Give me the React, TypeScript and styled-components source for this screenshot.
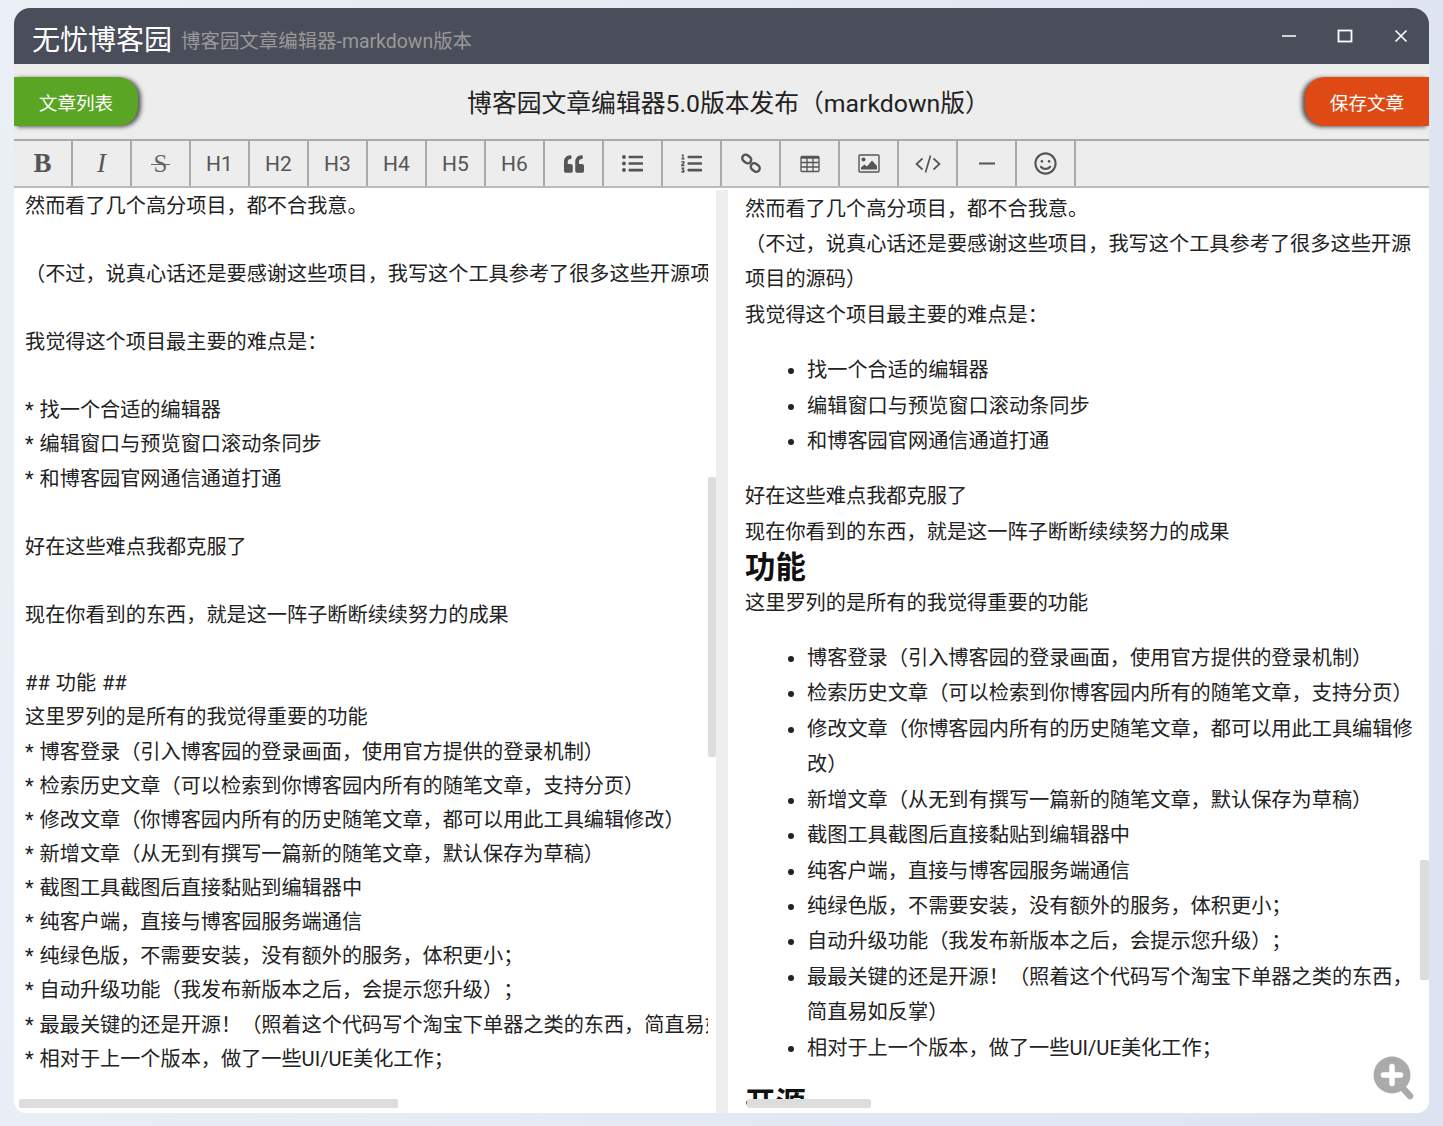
import React from "react";
import styled, { createGlobalStyle } from "styled-components";
import { FaListUl, FaListOl, FaQuoteLeft, FaRegSmile } from "react-icons/fa";

const CJK = `Roboto, "Noto Sans CJK SC", sans-serif`;

const Global = createGlobalStyle`
  html, body { margin: 0; padding: 0; }
  body {
    width: 1443px; height: 1126px; overflow: hidden;
    background: linear-gradient(100deg, #ebeff6 0%, #dde4f1 100%);
    font-family: ${CJK};
    text-spacing-trim: space-all;
  }
`;

const Page = styled.div`
  box-sizing: border-box; width: 1443px; height: 1126px; padding: 8px 14px 13px;
`;
const Win = styled.div`
  width: 1415px; height: 1105px; display: flex; flex-direction: column;
  border-radius: 16px 16px 12px 12px; overflow: hidden; background: #fff;
`;
const TitleBar = styled.header`
  flex: none; height: 56px; background: #4a4d5a; display: flex; align-items: center; padding-left: 18px;
`;
const Brand = styled.span`
  font-size: 28px; color: #fff; line-height: 56px; padding-top: 5px; height: 51px;
`;
const Sub = styled.span`
  font-size: 19.45px; color: #999; margin-left: 9px; padding-top: 6px; flex: 1;
`;
const WinBtns = styled.div`
  display: flex; align-items: center; gap: 32px; padding-right: 16px;
`;
const WinIcon = styled.svg`
  width: 24px; height: 24px; display: block; fill: none; stroke: #fff; stroke-width: 1.6;
`;
const ActionBar = styled.div`
  flex: none; height: 75px; background: #ededed; display: flex; align-items: center; justify-content: space-between;
`;
const ActionBtn = styled.button<{ $side: "left" | "right" }>`
  width: 124px; height: 49px; border: 0; padding: 0; color: #fff; font: 400 18.6px ${CJK};
  margin-top: -1px;
  background: ${(p) => (p.$side === "left" ? "#5ba524" : "#df4a14")};
  border-radius: ${(p) => (p.$side === "left" ? "0 20px 20px 0" : "20px 0 0 20px")};
  box-shadow: ${(p) => (p.$side === "left" ? "3px 1px 4px #555" : "-3px 1px 4px #555")};
`;
const DocTitle = styled.h1`
  margin: -2px 0 0 14px; font-size: 24.8px; font-weight: 400; color: #222; white-space: nowrap;
`;
const Toolbar = styled.div`
  flex: none; box-sizing: border-box; height: 49px; background: #ededed; display: flex;
  border-top: 2px solid #aaa; border-bottom: 2px solid #bbb;
`;
const ToolBtn = styled.div<{ $serif?: boolean; $italic?: boolean; $bold?: boolean }>`
  box-sizing: border-box; width: 59px; height: 45px; border-right: 2px solid #aaa;
  display: flex; align-items: center; justify-content: center; color: #555;
  font-family: ${(p) => (p.$serif ? `"Liberation Serif", serif` : CJK)};
  font-size: ${(p) => (p.$serif ? "27px" : "21px")};
  font-style: ${(p) => (p.$italic ? "italic" : "normal")};
  font-weight: ${(p) => (p.$bold ? 700 : 400)};
`;
const Strike = styled.span`
  position: relative; font-size: 25px; color: #666;
  &::after {
    content: ""; position: absolute; left: -3px; right: -3px; top: 14px; height: 1.5px; background: #666;
  }
`;
const ToolSvg = styled.svg`
  display: block; color: #555;
`;
const Body = styled.main`
  flex: 1; min-height: 0; display: flex; position: relative;
`;
const EditorPane = styled.section`
  flex: none; width: 702px; position: relative; overflow: hidden;
`;
const EditorText = styled.div`
  width: 683px; height: 100%; padding: 0.5px 0 0 11px; overflow: hidden;
`;
const CodeLine = styled.div`
  height: 34.13px; line-height: 34.13px; font-size: 20.17px; color: #222; white-space: pre; word-spacing: 0.9px;
`;
const Divider = styled.div`
  flex: none; width: 12px; margin-top: 2px; background: #eee;
`;
const PreviewPane = styled.section`
  flex: 1; min-width: 0; position: relative; overflow: hidden;
`;
const PreviewText = styled.div`
  box-sizing: border-box; height: 920px; overflow: hidden; padding: 3.5px 14px 0 17px;
  font-size: 20.2px; line-height: 35.4px; color: #222;
`;
const Para = styled.p`
  margin: 0;
`;
const List = styled.ul`
  margin: 20px 0; padding: 0 0 0 62px;
`;
const Heading = styled.h2`
  margin: 0; font-size: 30.4px; font-weight: 700; line-height: 35.5px; color: #111;
`;
const Thumb = styled.div<{ $x: number; $y: number; $w: number; $h: number }>`
  position: absolute; left: ${(p) => p.$x}px; top: ${(p) => p.$y}px; width: ${(p) => p.$w}px; height: ${(p) => p.$h}px;
  background: #ddd; border-radius: 2px;
`;
const ZoomBtn = styled.svg`
  position: absolute; right: 13px; bottom: 12px; width: 44px; height: 46px; display: block;
`;

const left = [
  "然而看了几个高分项目，都不合我意。", "",
  "（不过，说真心话还是要感谢这些项目，我写这个工具参考了很多这些开源项目的源码）", "",
  "我觉得这个项目最主要的难点是：", "",
  "* 找一个合适的编辑器", "* 编辑窗口与预览窗口滚动条同步", "* 和博客园官网通信通道打通", "",
  "好在这些难点我都克服了", "",
  "现在你看到的东西，就是这一阵子断断续续努力的成果", "",
  "## 功能 ##", "这里罗列的是所有的我觉得重要的功能",
  "* 博客登录（引入博客园的登录画面，使用官方提供的登录机制）",
  "* 检索历史文章（可以检索到你博客园内所有的随笔文章，支持分页）",
  "* 修改文章（你博客园内所有的历史随笔文章，都可以用此工具编辑修改）",
  "* 新增文章（从无到有撰写一篇新的随笔文章，默认保存为草稿）",
  "* 截图工具截图后直接黏贴到编辑器中",
  "* 纯客户端，直接与博客园服务端通信",
  "* 纯绿色版，不需要安装，没有额外的服务，体积更小；",
  "* 自动升级功能（我发布新版本之后，会提示您升级）；",
  "* 最最关键的还是开源！（照着这个代码写个淘宝下单器之类的东西，简直易如反掌）",
  "* 相对于上一个版本，做了一些UI/UE美化工作；",
];
const hard = ["找一个合适的编辑器", "编辑窗口与预览窗口滚动条同步", "和博客园官网通信通道打通"];
const feats = [
  "博客登录（引入博客园的登录画面，使用官方提供的登录机制）",
  "检索历史文章（可以检索到你博客园内所有的随笔文章，支持分页）",
  "修改文章（你博客园内所有的历史随笔文章，都可以用此工具编辑修改）",
  "新增文章（从无到有撰写一篇新的随笔文章，默认保存为草稿）",
  "截图工具截图后直接黏贴到编辑器中",
  "纯客户端，直接与博客园服务端通信",
  "纯绿色版，不需要安装，没有额外的服务，体积更小；",
  "自动升级功能（我发布新版本之后，会提示您升级）；",
  "最最关键的还是开源！（照着这个代码写个淘宝下单器之类的东西，简直易如反掌）",
  "相对于上一个版本，做了一些UI/UE美化工作；",
];

const LinkIcon = () => (
  <ToolSvg width="22" height="21" viewBox="0 0 22 21" fill="none" stroke="currentColor" strokeWidth="2.4">
    <rect x="2" y="2.5" width="9.5" height="7" rx="3.5" transform="rotate(38 6.7 6)" />
    <rect x="10.5" y="11" width="9.5" height="7" rx="3.5" transform="rotate(38 15.2 14.5)" />
  </ToolSvg>
);
const TableIcon = () => (
  <ToolSvg width="20" height="18" viewBox="0 0 20 18" fill="none" stroke="currentColor" strokeWidth="1.3">
    <rect x="1" y="1.5" width="18" height="15" rx="1" />
    <path d="M1 2.5h18" strokeWidth="2.4" />
    <path d="M1 7.5h18M1 12h18M7 3v13M13 3v13" />
  </ToolSvg>
);
const ImageIcon = () => (
  <ToolSvg width="22" height="19" viewBox="0 0 22 19">
    <rect x="1" y="1" width="20" height="17" fill="none" stroke="currentColor" strokeWidth="1.4" rx="1" />
    <circle cx="5.5" cy="5.5" r="2" fill="currentColor" />
    <path d="M3 15.5v-2l3.5-3 2.5 2 5-6 5 5.5v3.5z" fill="currentColor" />
  </ToolSvg>
);
const CodeIcon = () => (
  <ToolSvg width="28" height="22" viewBox="0 0 28 22" fill="none" stroke="currentColor" strokeWidth="1.7">
    <path d="M8.5 5.5 2.5 11l6 5.5M19.5 5.5l6 5.5-6 5.5M16.5 2.5l-5 17" />
  </ToolSvg>
);
const DashIcon = () => (
  <ToolSvg width="18" height="4" viewBox="0 0 18 4"><path d="M1 1.5h16" stroke="currentColor" strokeWidth="2" /></ToolSvg>
);

export default function App() {
  return (
    <Page>
      <Global />
      <Win>
        <TitleBar>
          <Brand>无忧博客园</Brand>
          <Sub>博客园文章编辑器-markdown版本</Sub>
          <WinBtns>
            <WinIcon viewBox="0 0 24 24"><path d="M5 12h14" /></WinIcon>
            <WinIcon viewBox="0 0 24 24"><rect x="5.5" y="6.5" width="13" height="11" strokeWidth="1.8" /></WinIcon>
            <WinIcon viewBox="0 0 24 24"><path d="M6.5 6.5l11 11M17.5 6.5l-11 11" /></WinIcon>
          </WinBtns>
        </TitleBar>
        <ActionBar>
          <ActionBtn $side="left">文章列表</ActionBtn>
          <DocTitle>博客园文章编辑器5.0版本发布（markdown版）</DocTitle>
          <ActionBtn $side="right">保存文章</ActionBtn>
        </ActionBar>
        <Toolbar>
          <ToolBtn $serif $bold>B</ToolBtn>
          <ToolBtn $serif $italic>I</ToolBtn>
          <ToolBtn $serif><Strike>S</Strike></ToolBtn>
          {["H1", "H2", "H3", "H4", "H5", "H6"].map((h) => <ToolBtn key={h}>{h}</ToolBtn>)}
          <ToolBtn><FaQuoteLeft size={20} /></ToolBtn>
          <ToolBtn><FaListUl size={21} /></ToolBtn>
          <ToolBtn><FaListOl size={21} /></ToolBtn>
          <ToolBtn><LinkIcon /></ToolBtn>
          <ToolBtn><TableIcon /></ToolBtn>
          <ToolBtn><ImageIcon /></ToolBtn>
          <ToolBtn><CodeIcon /></ToolBtn>
          <ToolBtn><DashIcon /></ToolBtn>
          <ToolBtn><FaRegSmile size={23} /></ToolBtn>
        </Toolbar>
        <Body>
          <EditorPane>
            <EditorText>
              {left.map((l, i) => <CodeLine key={i}>{l}</CodeLine>)}
            </EditorText>
            <Thumb $x={694} $y={289} $w={8} $h={280} />
            <Thumb $x={5} $y={911} $w={379} $h={9} />
          </EditorPane>
          <Divider />
          <PreviewPane>
            <PreviewText>
              <Para>然而看了几个高分项目，都不合我意。</Para>
              <Para>（不过，说真心话还是要感谢这些项目，我写这个工具参考了很多这些开源项目的源码）</Para>
              <Para>我觉得这个项目最主要的难点是：</Para>
              <List>{hard.map((t) => <li key={t}>{t}</li>)}</List>
              <Para>好在这些难点我都克服了</Para>
              <Para>现在你看到的东西，就是这一阵子断断续续努力的成果</Para>
              <Heading>功能</Heading>
              <Para>这里罗列的是所有的我觉得重要的功能</Para>
              <List>{feats.map((t) => <li key={t}>{t}</li>)}</List>
              <Heading>开源</Heading>
            </PreviewText>
            <Thumb $x={692} $y={672} $w={9} $h={120} />
            <Thumb $x={19} $y={911} $w={124} $h={9} />
          </PreviewPane>
          <ZoomBtn viewBox="0 0 44 46">
            <path d="M28 30l10 11" stroke="#aaa" strokeWidth="6.5" strokeLinecap="round" />
            <circle cx="20" cy="20" r="18.5" fill="#aaa" />
            <path d="M20 11.5v17M11.5 20h17" stroke="#fff" strokeWidth="5.5" strokeLinecap="round" />
          </ZoomBtn>
        </Body>
      </Win>
    </Page>
  );
}
